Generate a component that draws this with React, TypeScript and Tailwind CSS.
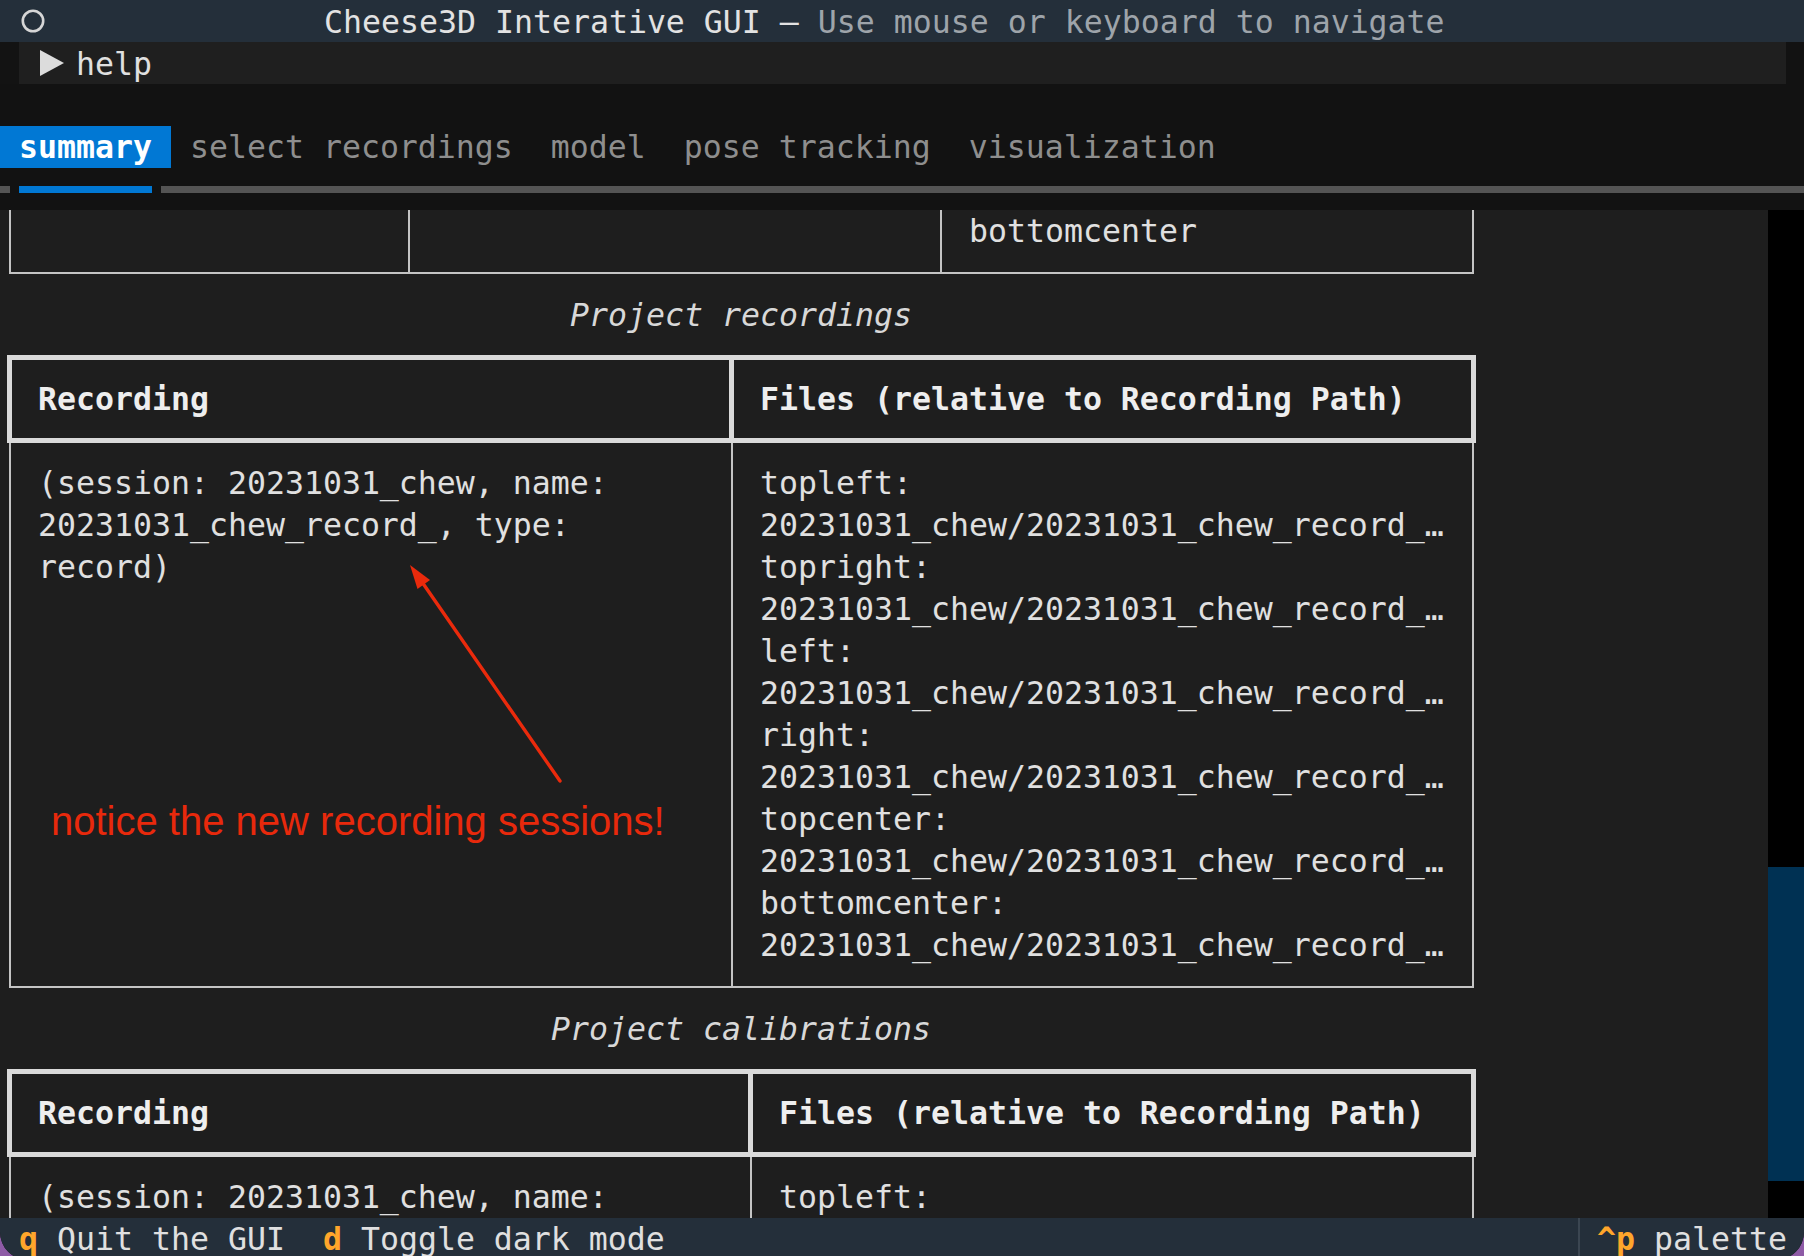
import React from 'react';

const mono = "font-['DejaVu_Sans_Mono','Liberation_Mono',monospace]";

const tabs = ['select recordings', 'model', 'pose tracking', 'visualization'];
const cams = ['topleft', 'topright', 'left', 'right', 'topcenter', 'bottomcenter'];
const path = '20231031_chew/20231031_chew_record_…';

const recordingLeft = ['(session: 20231031_chew, name:', '20231031_chew_record_, type:', 'record)'];
const recordingRight = cams.flatMap((c) => [`${c}:`, path]);

interface TableProps {
  headCol: string;
  bodyCol: string;
  left: string[];
  right: string[];
}

const Line: React.FC<{ text: string }> = ({ text }) => (
  <div className="h-[42px] leading-[42px] whitespace-pre">{text}</div>
);

// rich-style table: heavy box round the header, light box round the body
const SummaryTable: React.FC<TableProps> = ({ headCol, bodyCol, left, right }) => (
  <div>
    <div className="mt-[19px] ml-[7px] w-[1469px] flex border-[5px] border-[#dadada] font-bold text-[#eeeeee]">
      <div className={`${headCol} shrink-0 border-r-[5px] border-[#dadada] py-[18px] pl-[26px] leading-[42px]`}>
        Recording
      </div>
      <div className="flex-1 py-[18px] pl-[26px] leading-[42px] whitespace-pre">Files (relative to Recording Path)</div>
    </div>
    <div className="ml-[9px] w-[1465px] flex border-x-2 border-b-2 border-[#c4c4c4]">
      <div className={`${bodyCol} shrink-0 border-r-2 border-[#c4c4c4] pt-[19px] pb-[20px] pl-[27px]`}>
        {left.map((t, i) => (
          <Line key={i} text={t} />
        ))}
      </div>
      <div className="flex-1 pt-[19px] pb-[20px] pl-[27px]">
        {right.map((t, i) => (
          <Line key={i} text={t} />
        ))}
      </div>
    </div>
  </div>
);

const Caption: React.FC<{ text: string }> = ({ text }) => (
  <div className="mt-[20px] w-[1482px] h-[42px] leading-[42px] text-center italic text-[#d8d8d8] whitespace-pre">{text}</div>
);

export default function App() {
  return (
    <div className="w-[1804px] h-[1256px] overflow-hidden bg-[#8e5ba6]">
      <div className={`${mono} w-[1804px] h-[1260px] flex flex-col bg-[#121212] text-[31.56px] text-[#e0e0e0] rounded-b-[28px] overflow-hidden`}>
        {/* title bar */}
        <div className="h-[42px] shrink-0 flex items-center bg-[#242f3a]">
          <svg className="ml-[21px] shrink-0" width="24" height="24" viewBox="0 0 24 24">
            <circle cx="12" cy="12" r="10.2" fill="none" stroke="#d6d6d6" strokeWidth="2.6" />
          </svg>
          <div className="ml-[279px] pt-[1px] leading-[42px] whitespace-pre text-[#e2e2e2]">
            Cheese3D Interative GUI – <span className="text-[#9ea4aa]">Use mouse or keyboard to navigate</span>
          </div>
        </div>

        {/* help collapsible */}
        <div className="h-[42px] shrink-0 flex">
          <div className="w-[19px] bg-[#131313]" />
          <div className="flex-1 flex items-center bg-[#1f1f1f]">
            <svg className="ml-[21px] shrink-0" width="24" height="26" viewBox="0 0 24 26">
              <polygon points="0,0 24,13 0,26" fill="#dcdcdc" />
            </svg>
            <span className="ml-[12px] pt-[1px] leading-[42px]">help</span>
          </div>
          <div className="w-[18px] bg-[#121212]" />
        </div>

        <div className="h-[42px] shrink-0" />

        {/* tabs */}
        <div className="h-[42px] shrink-0 flex leading-[42px] whitespace-pre">
          <div className="px-[19px] bg-[#0178d4] text-white font-bold">summary</div>
          {tabs.map((t) => (
            <div key={t} className="px-[19px] text-[#8e8e8e]">
              {t}
            </div>
          ))}
        </div>
        <div className="h-[42px] shrink-0 pt-[18px]">
          <div className="h-[7px] flex">
            <div className="w-[10px] bg-[#545454]" />
            <div className="w-[9px]" />
            <div className="w-[133px] bg-[#0178d4]" />
            <div className="w-[9px]" />
            <div className="flex-1 bg-[#545454]" />
          </div>
        </div>

        {/* scrolled content */}
        <div className="h-[1008px] shrink-0 flex">
          <div className="relative w-[1768px] h-full overflow-hidden bg-[#1e1e1e]">
            <div className="ml-[9px] w-[1465px] h-[64px] flex border-x-2 border-b-2 border-[#c4c4c4]">
              <div className="w-[399px] shrink-0 border-r-2 border-[#c4c4c4]" />
              <div className="w-[532px] shrink-0 border-r-2 border-[#c4c4c4]" />
              <div className="flex-1 pl-[27px] leading-[42px]">bottomcenter</div>
            </div>

            <Caption text="Project recordings" />
            <SummaryTable headCol="w-[722px]" bodyCol="w-[722px]" left={recordingLeft} right={recordingRight} />

            <Caption text="Project calibrations" />
            <SummaryTable
              headCol="w-[741px]"
              bodyCol="w-[741px]"
              left={['(session: 20231031_chew, name:']}
              right={['topleft:']}
            />

            {/* annotation */}
            <svg className="absolute left-0 top-0 pointer-events-none" width="1768" height="1008">
              <line x1="560" y1="571" x2="422" y2="372" stroke="#ea2a0c" strokeWidth="3.4" strokeLinecap="round" />
              <polygon points="410,355 430,370 417.5,379" fill="#ea2a0c" />
            </svg>
            <div className="absolute left-[51px] top-[591px] font-['Liberation_Sans',Arial,sans-serif] text-[40px] leading-none text-[#e8290c] whitespace-pre">
              notice the new recording sessions!
            </div>
          </div>
          <div className="flex-1 flex flex-col bg-black">
            <div className="h-[657px]" />
            <div className="h-[314px] bg-[#003153]" />
          </div>
        </div>

        {/* footer */}
        <div className="h-[42px] shrink-0 flex bg-[#242f3a] leading-[42px] whitespace-pre">
          <div className="flex-1">
            {' '}
            <span className="font-bold text-[#ffa62b]">q</span> Quit the GUI{'  '}
            <span className="font-bold text-[#ffa62b]">d</span> Toggle dark mode
          </div>
          <div className="w-[226px] shrink-0 border-l-2 border-[#3b4651] pl-[17px]">
            <span className="font-bold text-[#ffa62b]">^p</span> palette
          </div>
        </div>
      </div>
    </div>
  );
}
